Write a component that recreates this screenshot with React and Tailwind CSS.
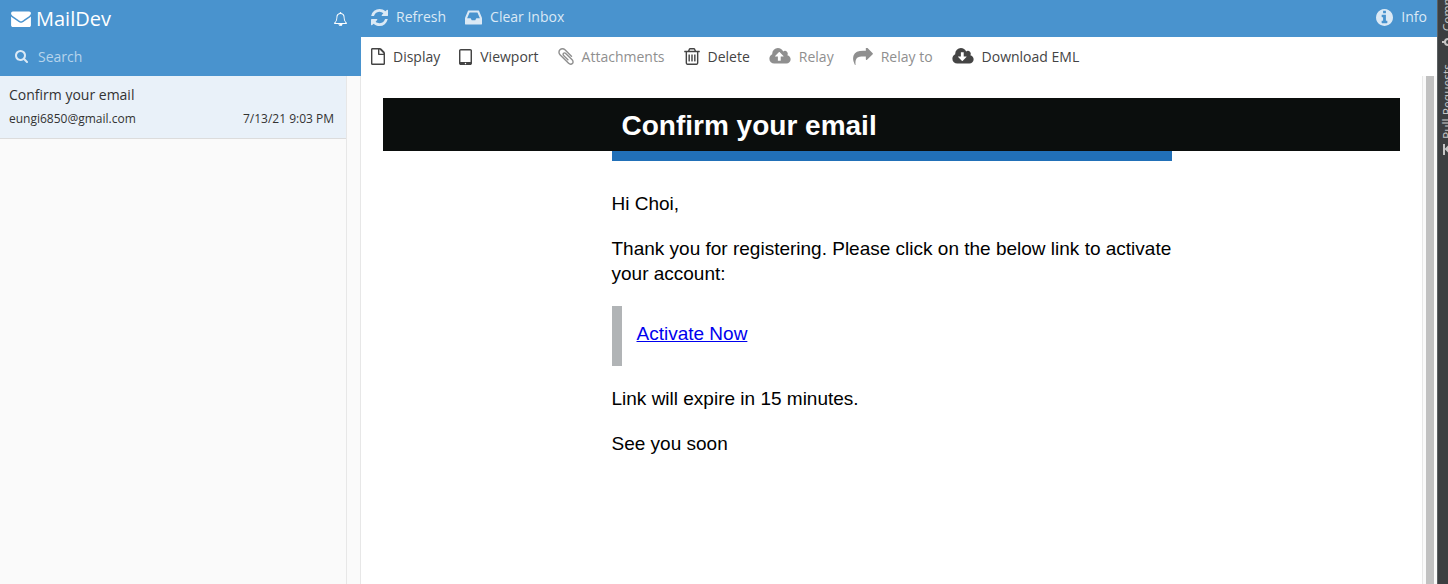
import React from 'react';

const CLOUD =
  'm640 IY q0 159-112.5 271.5t-271.5 112.5h-1088q-185 0-316.5-131.5t-131.5-316.5q0-130 70-240t188-165q-2-30-2-43 0-212 150-362t362-150q156 0 285.5 87t188.5 231q71-62 166-62 106 0 181 75t75 181q0 76-41 138 130 31 213.5 135.5t83.5 238.5z';

const ICONS = {
  envelope: ['0 128 1792 1536', 'M1792 710v794q0 66-47 113t-113 47h-1472q-66 0-113-47t-47-113v-794q44 49 101 87 362 246 497 345 57 42 92.5 65.5t94.5 48 110 24.5h2q51 0 110-24.5t94.5-48 92.5-65.5q170-123 498-345 57-39 100-87zm0-294q0 79-49 151t-122 123q-376 261-468 325-10 7-42.5 31t-54 38.5-52 32.5-57.5 27-50 9h-2q-23 0-50-9t-57.5-27-52-32.5-54-38.5-42.5-31q-91-64-262-182.5t-205-142.5q-62-42-117-115.5t-55-136.5q0-78 41.5-130t118.5-52h1472q65 0 112.5 47t47.5 113z'],
  bell: ['64 0 1664 1792', 'M912 1696q0-16-16-16-59 0-101.5-42.5t-42.5-101.5q0-16-16-16t-16 16q0 73 51.5 124.5t124.5 51.5q16 0 16-16zm-666-288h1300q-266-300-266-832 0-51-24-105t-69-103-121.5-80.5-169.5-31.5-169.5 31.5-121.5 80.5-69 103-24 105q0 532-266 832zm1482 0q0 52-38 90t-90 38h-448q0 106-75 181t-181 75-181-75-75-181h-448q-52 0-90-38t-38-90q50-42 91-88t85-119.5 74.5-158.5 50-206 19.5-260q0-152 117-282.5t307-158.5q-8-19-8-39 0-40 28-68t68-28 68 28 28 68q0 20-8 39 190 28 307 158.5t117 282.5q0 139 19.5 260t50 206 74.5 158.5 85 119.5 91 88z'],
  search: ['64 128 1664 1664', 'M1216 832q0-185-131.5-316.5t-316.5-131.5-316.5 131.5-131.5 316.5 131.5 316.5 316.5 131.5 316.5-131.5 131.5-316.5zm512 832q0 52-38 90t-90 38q-54 0-90-38l-343-342q-179 124-399 124-143 0-273.5-55.5t-225-150-150-225-55.5-273.5 55.5-273.5 150-225 225-150 273.5-55.5 273.5 55.5 225 150 150 225 55.5 273.5q0 220-124 399l343 343q37 37 37 90z'],
  refresh: ['128 128 1536 1536', 'M1639 1056q0 5-1 7-64 268-268 434.5t-478 166.5q-146 0-282.5-55t-243.5-157l-129 129q-19 19-45 19t-45-19-19-45v-448q0-26 19-45t45-19h448q26 0 45 19t19 45-19 45l-137 137q71 66 161 102t187 36q134 0 250-65t186-179q11-17 53-117 8-23 30-23h192q13 0 22.5 9.5t9.5 22.5zm25-800v448q0 26-19 45t-45 19h-448q-26 0-45-19t-19-45 19-45l138-138q-148-137-349-137-134 0-250 65t-186 179q-11 17-53 117-8 23-30 23h-199q-13 0-22.5-9.5t-9.5-22.5v-7q65-268 270-434.5t480-166.5q146 0 284 55.5t245 156.5l130-129q19-19 45-19t45 19 19 45z'],
  inbox: ['128 128 1536 1536', 'M1151 960h316q-1-3-2.5-8t-2.5-8l-212-496h-708l-212 496q-1 2-2.5 8t-2.5 8h316l95 192h320zm513 30v482q0 26-19 45t-45 19h-1408q-26 0-45-19t-19-45v-482q0-62 25-123l238-552q10-25 36.5-42t52.5-17h832q26 0 52.5 17t36.5 42l238 552q25 61 25 123z'],
  info: ['128 128 1536 1536', 'M1152 1376v-160q0-14-9-23t-23-9h-96v-512q0-14-9-23t-23-9h-320q-14 0-23 9t-9 23v160q0 14 9 23t23 9h96v320h-96q-14 0-23 9t-9 23v160q0 14 9 23t23 9h448q14 0 23-9t9-23zm-128-896v-160q0-14-9-23t-23-9h-192q-14 0-23 9t-9 23v160q0 14 9 23t23 9h192q14 0 23-9t9-23zm640 416q0 209-103 385.5t-279.5 279.5-385.5 103-385.5-103-279.5-279.5-103-385.5 103-385.5 279.5-279.5 385.5-103 385.5 103 279.5 279.5 103 385.5z'],
  file: ['0 0 1280 1536', 'M1212 316q28 28 48 76t20 88v960q0 40-28 68t-68 28h-1088q-40 0-68-28t-28-68v-1344q0-40 28-68t68-28h704q40 0 88 20t76 48zM768 136v376h376q-10-29-22-41l-313-313q-12-12-41-22zM1152 1408v-768h-416q-40 0-68-28t-28-68v-416h-512v1280z'],
  tablet: ['320 128 1152 1408', 'M960 1408q0-26-19-45t-45-19-45 19-19 45 19 45 45 19 45-19 19-45zm384-160v-960q0-13-9.5-22.5t-22.5-9.5h-832q-13 0-22.5 9.5t-9.5 22.5v960q0 13 9.5 22.5t22.5 9.5h832q13 0 22.5-9.5t9.5-22.5zm128-960v1088q0 66-47 113t-113 47h-832q-66 0-113-47t-47-113v-1088q0-66 47-113t113-47h832q66 0 113 47t47 113z'],
  clip: ['192 128 1408 1536', 'M1596 1385q0 117-79 196t-196 79q-135 0-235-100l-777-776q-113-115-113-271 0-159 110-270t269-111q158 0 273 113l605 606q10 10 10 22 0 16-30.5 46.5t-46.5 30.5q-13 0-23-10l-606-607q-79-77-181-77-106 0-179 75t-73 181q0 105 76 181l776 777q63 63 145 63 64 0 106-42t42-106q0-82-63-145l-581-581q-26-24-60-24-29 0-48 19t-19 48q0 32 25 59l410 410q10 10 10 22 0 16-31 47t-47 31q-12 0-22-10l-410-410q-63-61-63-149 0-82 57-139t139-57q88 0 149 63l581 581q100 98 100 235z'],
  trash: ['192 128 1408 1536', 'M704 736v576q0 14-9 23t-23 9h-64q-14 0-23-9t-9-23v-576q0-14 9-23t23-9h64q14 0 23 9t9 23zm256 0v576q0 14-9 23t-23 9h-64q-14 0-23-9t-9-23v-576q0-14 9-23t23-9h64q14 0 23 9t9 23zm256 0v576q0 14-9 23t-23 9h-64q-14 0-23-9t-9-23v-576q0-14 9-23t23-9h64q14 0 23 9t9 23zm128 724v-948h-896v948q0 22 7 40.5t14.5 27 10.5 8.5h832q3 0 10.5-8.5t14.5-27 7-40.5zm-672-1076h448l-48-117q-7-9-17-11h-317q-10 2-17 11zm928 32v64q0 14-9 23t-23 9h-96v948q0 83-47 143.5t-113 60.5h-832q-66 0-113-58.5t-47-141.5v-952h-96q-14 0-23-9t-9-23v-64q0-14 9-23t23-9h309l70-167q15-37 54-63t79-26h320q40 0 79 26t54 63l70 167h309q14 0 23 9t9 23z'],
  upload: ['-64 128 1920 1536', 'M1216 864q0-14-9-23l-352-352q-9-9-23-9t-23 9l-351 351q-10 12-10 24 0 14 9 23t23 9h224v352q0 13 9.5 22.5t22.5 9.5h192q13 0 22.5-9.5t9.5-22.5v-352h224q13 0 22.5-9.5t9.5-22.5z' + CLOUD.replace('IY', '288')],
  download: ['-64 128 1920 1536', 'M1216 928q0-14-9-23t-23-9h-224v-352q0-13-9.5-22.5t-22.5-9.5h-192q-13 0-22.5 9.5t-9.5 22.5v352h-224q-13 0-22.5 9.5t-9.5 22.5q0 14 9 23l352 352q9 9 23 9t23-9l351-351q10-12 10-24z' + CLOUD.replace('IY', '224')],
  share: ['0 128 1792 1536', 'M1792 640q0 26-19 45l-512 512q-19 19-45 19t-45-19-19-45v-256h-224q-98 0-175.5 6t-154 21.5-133 42.5-105.5 69.5-80 101-48.5 138.5-17.5 181q0 55 5 123 0 6 2.5 23.5t2.5 26.5q0 15-8.5 25t-23.5 10q-16 0-28-17-7-9-13-22t-13.5-30-10.5-24q-127-285-127-451 0-199 53-333 162-403 875-403h224v-256q0-26 19-45t45-19 45 19l512 512q19 19 19 45z'],
};

function Icon({ name, className }) {
  const [viewBox, d] = ICONS[name];
  return (
    <svg viewBox={viewBox} fill="currentColor" fillRule={name === 'file' ? 'evenodd' : 'nonzero'} aria-hidden="true" className={'shrink-0 ' + className}>
      <path d={d} />
    </svg>
  );
}

const ACTIONS = [
  { label: 'Display', icon: 'file', size: 'h-[17px] w-[14px]' },
  { label: 'Viewport', icon: 'tablet', size: 'h-4 w-[13px]' },
  { label: 'Attachments', icon: 'clip', size: 'h-[17px] w-4', disabled: true },
  { label: 'Delete', icon: 'trash', size: 'h-[17px] w-4' },
  { label: 'Relay', icon: 'upload', size: 'h-[17px] w-[22px]', disabled: true },
  { label: 'Relay to', icon: 'share', size: 'h-[17px] w-5', disabled: true },
  { label: 'Download EML', icon: 'download', size: 'h-[17px] w-[22px]' },
];

function Sidebar() {
  return (
    <aside className="flex w-[361px] shrink-0 flex-col">
      <header className="bg-[#4993ce] text-white">
        <div className="flex h-[37px] items-center justify-between pr-[14px] pl-[11px]">
          <a href="#" className="flex items-center gap-[5px] text-xl">
            <Icon name="envelope" className="h-[17px] w-5" />
            MailDev
          </a>
          <button type="button" aria-label="Notifications">
            <Icon name="bell" className="h-[14px] w-[13px]" />
          </button>
        </div>
        <label className="flex h-[39px] items-center gap-[10px] pl-[15px] text-[#dbe9f5]">
          <Icon name="search" className="h-[13px] w-[13px]" />
          <input
            type="text"
            aria-label="Search"
            placeholder="Search"
            className="min-w-0 flex-1 bg-transparent text-sm outline-none placeholder:text-[#b6d4ec]"
          />
        </label>
      </header>
      <div className="flex-1 border-r border-[#e7e7e7] bg-[#fafafa] pr-[13px]">
        <ul className="h-full border-r border-[#e7e7e7]">
          <li className="border-b border-[#dcdcdc] bg-[#e9f1f9]">
            <a href="#" className="block px-[9px] pt-[9px] pb-[10px] text-[#333]">
              <span className="block text-sm leading-5">Confirm your email</span>
              <span className="mt-1 flex justify-between pr-[3px] text-xs leading-[19px]">
                <span>eungi6850@gmail.com</span>
                <span>7/13/21 9:03 PM</span>
              </span>
            </a>
          </li>
        </ul>
      </div>
    </aside>
  );
}

function Mail() {
  return (
    <article className="min-w-0 flex-1 px-[22px] pt-[22px] font-['Liberation_Sans',Arial,sans-serif] text-[19px] leading-[25px] text-black">
      <div className="bg-[#0b0e0d]">
        <h1 className="mx-auto max-w-[560px] px-[10px] pt-[11px] pb-[9px] text-[28px] leading-[33px] font-bold text-white">
          Confirm your email
        </h1>
      </div>
      <div className="mx-auto flex max-w-[560px] flex-col gap-5 border-t-[10px] border-[#2170b8] pt-[30px]">
        <p>Hi Choi,</p>
        <p>Thank you for registering. Please click on the below link to activate your account:</p>
        <blockquote className="flex h-[60px] items-center border-l-[10px] border-[#b1b4b6] pb-[5px] pl-[15px]">
          <a href="#" className="text-[#0000ee] underline">Activate Now</a>
        </blockquote>
        <p>Link will expire in 15 minutes.</p>
        <p>See you soon</p>
      </div>
    </article>
  );
}

export default function App() {
  return (
    <div className="flex h-screen overflow-hidden bg-white font-['Open_Sans',sans-serif]">
      <Sidebar />
      <main className="flex min-w-0 flex-1 flex-col">
        <nav className="flex h-[37px] shrink-0 items-center bg-[#4993ce] px-[10px] pb-[2px] text-sm text-[#dbe9f5]">
          <button type="button" className="flex items-center gap-2">
            <Icon name="refresh" className="h-[17px] w-[17px]" />
            <span className="pb-[2px]">Refresh</span>
          </button>
          <button type="button" className="ml-[19px] flex items-center gap-2">
            <Icon name="inbox" className="h-[17px] w-[17px]" />
            <span className="pb-[2px]">Clear Inbox</span>
          </button>
          <button type="button" className="ml-auto flex items-center gap-2">
            <Icon name="info" className="h-[17px] w-[17px]" />
            <span className="pb-[2px]">Info</span>
          </button>
        </nav>
        <div className="flex h-[39px] shrink-0 items-center gap-[19px] px-[10px] text-sm text-[#444]">
          {ACTIONS.map((a) => (
            <button
              key={a.label}
              type="button"
              disabled={a.disabled}
              className="flex items-center gap-2 disabled:text-[#8f8f8f]"
            >
              <Icon name={a.icon} className={a.size} />
              {a.label}
            </button>
          ))}
        </div>
        <div className="flex flex-1">
          <Mail />
          <div className="w-[15px] border-l border-[#e8e8e8] bg-[#fafafa] px-[3px]">
            <div className="h-full bg-[#c1c1c1]" />
          </div>
        </div>
      </main>
      <aside className="w-[11px] shrink-0 overflow-hidden border-l border-[#5b6062] bg-[#3c3f41] pl-1 text-[#c5c5c5]">
        <div className="flex h-[31px] items-end text-xs leading-3">
          <span className="rotate-180 whitespace-nowrap [writing-mode:vertical-rl]">Commit</span>
        </div>
        <svg viewBox="0 0 12 12" className="mt-[5px] h-3 w-3" fill="none" stroke="currentColor" strokeWidth="2" aria-hidden="true">
          <circle cx="6" cy="6" r="3" />
          <path d="M0 6h3M9 6h3" />
        </svg>
        <div className="flex h-[91px] items-end text-xs leading-3">
          <span className="rotate-180 whitespace-nowrap [writing-mode:vertical-rl]">Pull Requests</span>
        </div>
        <svg viewBox="0 0 12 12" className="mt-[5px] h-3 w-3" fill="none" stroke="currentColor" strokeWidth="2" aria-hidden="true">
          <path d="M2 0v11M4 5h8M7 2l-3 3 3 3" />
        </svg>
      </aside>
    </div>
  );
}
